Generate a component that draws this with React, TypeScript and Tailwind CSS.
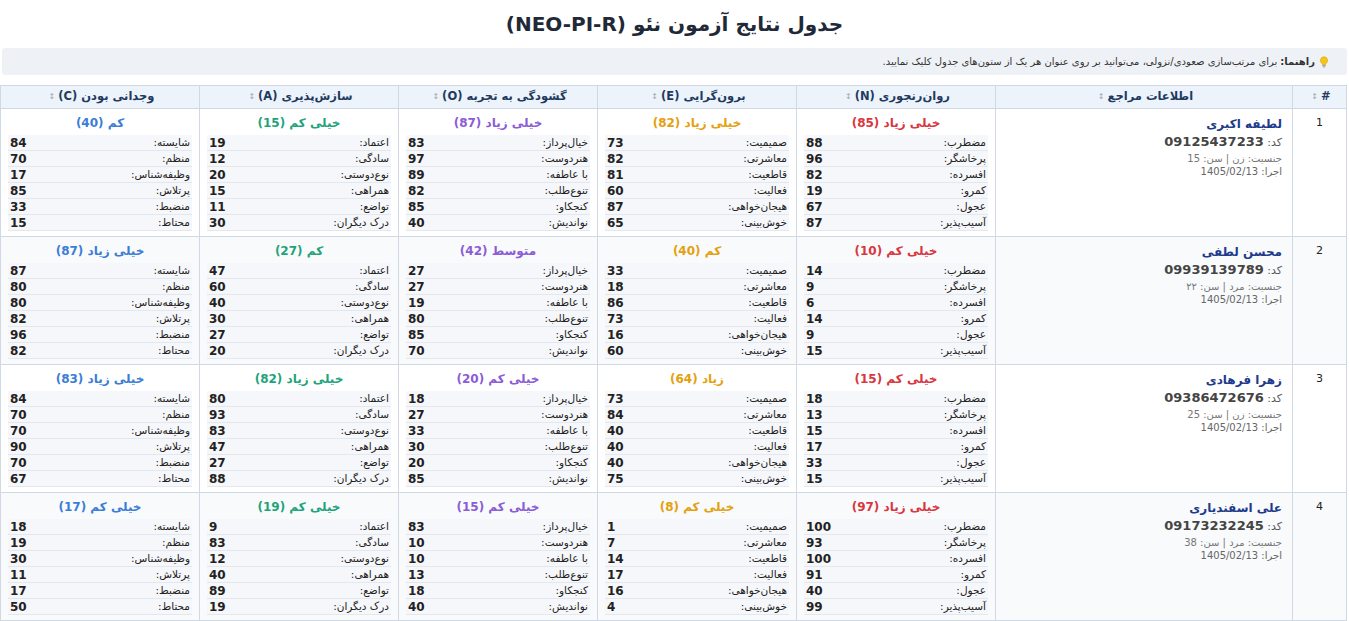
import React from "react";

type Trait = { level: string; score: number; values: number[] };
type Row = {
  id: number;
  name: string;
  code: string;
  gender: string;
  age: string;
  date: string;
  traits: Trait[];
};

const traitLabels = [
  ["مضطرب:", "پرخاشگر:", "افسرده:", "کمرو:", "عجول:", "آسیب‌پذیر:"],
  ["صمیمیت:", "معاشرتی:", "قاطعیت:", "فعالیت:", "هیجان‌خواهی:", "خوش‌بینی:"],
  ["خیال‌پرداز:", "هنردوست:", "با عاطفه:", "تنوع‌طلب:", "کنجکاو:", "نواندیش:"],
  ["اعتماد:", "سادگی:", "نوع‌دوستی:", "همراهی:", "تواضع:", "درک دیگران:"],
  ["شایسته:", "منظم:", "وظیفه‌شناس:", "پرتلاش:", "منضبط:", "محتاط:"],
];

const traitColors = [
  "text-[#d9363e]",
  "text-[#e5a00d]",
  "text-[#8b5cd6]",
  "text-[#1fa37a]",
  "text-[#3b7dd6]",
];

const headers = [
  "روان‌رنجوری (N)",
  "برون‌گرایی (E)",
  "گشودگی به تجربه (O)",
  "سازش‌پذیری (A)",
  "وجدانی بودن (C)",
];

const rows: Row[] = [
  {
    id: 1,
    name: "لطیفه اکبری",
    code: "09125437233",
    gender: "زن",
    age: "15",
    date: "1405/02/13",
    traits: [
      { level: "خیلی زیاد", score: 85, values: [88, 96, 82, 19, 67, 87] },
      { level: "خیلی زیاد", score: 82, values: [73, 82, 81, 60, 87, 65] },
      { level: "خیلی زیاد", score: 87, values: [83, 97, 89, 82, 85, 40] },
      { level: "خیلی کم", score: 15, values: [19, 12, 20, 15, 11, 30] },
      { level: "کم", score: 40, values: [84, 70, 17, 85, 33, 15] },
    ],
  },
  {
    id: 2,
    name: "محسن لطفی",
    code: "09939139789",
    gender: "مرد",
    age: "۲۲",
    date: "1405/02/13",
    traits: [
      { level: "خیلی کم", score: 10, values: [14, 9, 6, 14, 9, 15] },
      { level: "کم", score: 40, values: [33, 18, 86, 73, 16, 60] },
      { level: "متوسط", score: 42, values: [27, 27, 19, 80, 85, 70] },
      { level: "کم", score: 27, values: [47, 60, 40, 30, 27, 20] },
      { level: "خیلی زیاد", score: 87, values: [87, 80, 80, 82, 96, 82] },
    ],
  },
  {
    id: 3,
    name: "زهرا فرهادی",
    code: "09386472676",
    gender: "زن",
    age: "25",
    date: "1405/02/13",
    traits: [
      { level: "خیلی کم", score: 15, values: [18, 13, 15, 17, 33, 15] },
      { level: "زیاد", score: 64, values: [73, 84, 40, 40, 40, 75] },
      { level: "خیلی کم", score: 20, values: [18, 27, 33, 30, 20, 85] },
      { level: "خیلی زیاد", score: 82, values: [80, 93, 83, 47, 27, 88] },
      { level: "خیلی زیاد", score: 83, values: [84, 70, 70, 90, 70, 67] },
    ],
  },
  {
    id: 4,
    name: "علی اسفندیاری",
    code: "09173232245",
    gender: "مرد",
    age: "38",
    date: "1405/02/13",
    traits: [
      { level: "خیلی زیاد", score: 97, values: [100, 93, 100, 91, 40, 99] },
      { level: "خیلی کم", score: 8, values: [1, 7, 14, 17, 16, 4] },
      { level: "خیلی کم", score: 15, values: [83, 10, 10, 13, 18, 40] },
      { level: "خیلی کم", score: 19, values: [9, 83, 12, 40, 89, 19] },
      { level: "خیلی کم", score: 17, values: [18, 19, 30, 11, 17, 50] },
    ],
  },
];

function SortMark() {
  return <span className="mx-[3px] text-[8px] text-[#9aa5b4] font-normal align-middle">↕</span>;
}

function Bulb() {
  return (
    <svg width="10" height="12" viewBox="0 0 10 12" className="inline-block ml-[4px] align-[-1px]">
      <path d="M5 0.8a3.6 3.6 0 0 0-2.2 6.5c.5.4.7.9.7 1.4h3c0-.5.2-1 .7-1.4A3.6 3.6 0 0 0 5 .8z" fill="#f5c518" stroke="#d9a400" strokeWidth="0.6" />
      <rect x="3.4" y="9.1" width="3.2" height="1.1" fill="#9a9a9a" />
      <rect x="3.8" y="10.5" width="2.4" height="0.9" fill="#9a9a9a" />
    </svg>
  );
}

function TraitCell({ trait, idx }: { trait: Trait; idx: number }) {
  return (
    <td className="border border-[#cfd8e3] align-top px-[7px] pt-[5px] pb-[5px]">
      <div className={`text-center font-bold text-[12px] h-[19px] leading-[19px] ${traitColors[idx]}`}>
        {trait.level} ({trait.score})
      </div>
      <div className="mt-[2px] bg-[#f5f7fa] rounded-[2px]">
        {traitLabels[idx].map((label, i) => (
          <div
            key={label}
            className="flex items-center justify-between h-[16px] border-b border-[#e3e8ef] px-[2px]"
          >
            <span className="text-[10.5px] text-[#222]">{label}</span>
            <span className="text-[12px] font-bold text-[#222]">{trait.values[i]}</span>
          </div>
        ))}
      </div>
    </td>
  );
}

export default function App() {
  return (
    <div dir="rtl" className="min-h-screen bg-white font-['Tahoma','DejaVu_Sans',sans-serif] text-[#222]">
      <h1 className="h-[48px] flex items-center justify-center text-[20px] font-bold text-[#1f2937]">
        جدول نتایج آزمون نئو (NEO-PI-R)
      </h1>
      <div className="mx-[2px] h-[27px] flex items-center px-[18px] bg-[#eef2f7] rounded-[3px] text-[10px] text-[#333]">
        <Bulb />
        <span className="font-bold ml-[3px]">راهنما:</span>
        برای مرتب‌سازی صعودی/نزولی، می‌توانید بر روی عنوان هر یک از ستون‌های جدول کلیک نمایید.
      </div>
      <table className="mt-[10px] mx-[2px] w-[1346px] table-fixed border-collapse">
        <colgroup>
          <col className="w-[54px]" />
          <col className="w-[297px]" />
          <col className="w-[199px]" />
          <col className="w-[199px]" />
          <col className="w-[199px]" />
          <col className="w-[199px]" />
          <col className="w-[199px]" />
        </colgroup>
        <thead>
          <tr className="h-[23px] bg-[#edf3fb] text-[#1e3a5f] text-[11.5px] font-bold">
            <th className="border border-[#cfd8e3] font-bold">
              #<SortMark />
            </th>
            <th className="border border-[#cfd8e3] font-bold">
              اطلاعات مراجع
              <SortMark />
            </th>
            {headers.map((h) => (
              <th key={h} className="border border-[#cfd8e3] font-bold">
                {h}
                <SortMark />
              </th>
            ))}
          </tr>
        </thead>
        <tbody>
          {rows.map((r) => (
            <tr key={r.id} className={r.id % 2 === 0 ? "bg-[#f8fafc]" : "bg-white"}>
              <td className="border border-[#cfd8e3] align-top text-center pt-[6px] text-[11px]">
                {r.id}
              </td>
              <td className="border border-[#cfd8e3] align-top px-[10px] pt-[6px]">
                <div className="text-[12px] font-bold text-[#1e3a8a] leading-[18px]">{r.name}</div>
                <div className="text-[11px] text-[#555] leading-[18px]">
                  کد: <span className="text-[13px] font-bold text-[#444]">{r.code}</span>
                </div>
                <div className="text-[10px] text-[#777] leading-[13px]">
                  جنسیت: {r.gender} | سن: {r.age}
                </div>
                <div className="text-[10px] text-[#666] leading-[13px]">اجرا: {r.date}</div>
              </td>
              {r.traits.map((t, i) => (
                <TraitCell key={i} trait={t} idx={i} />
              ))}
            </tr>
          ))}
        </tbody>
      </table>
    </div>
  );
}
